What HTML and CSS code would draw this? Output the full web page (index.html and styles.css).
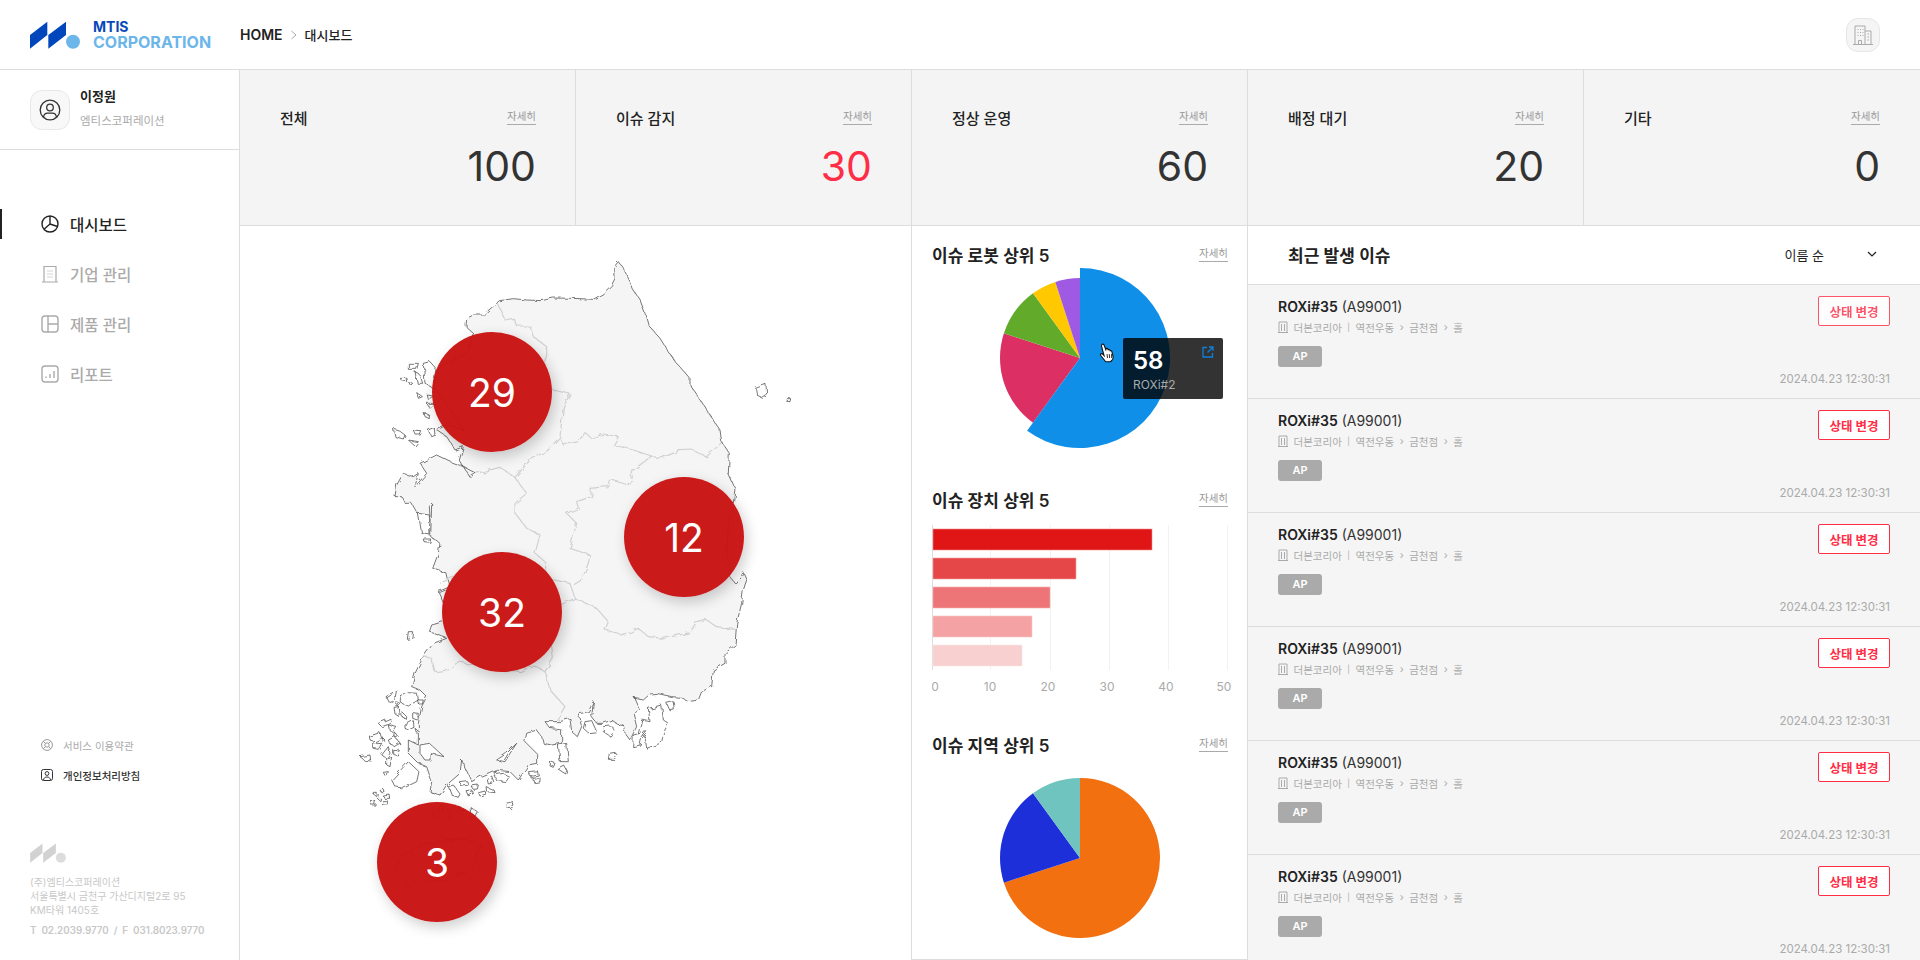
FILE: index.html
```html
<!DOCTYPE html>
<html lang="ko">
  <head>
    <meta charset="utf-8">
    <title>MTIS 대시보드</title>
    <link rel="stylesheet" href="styles.css">
  </head>
  <body>
    <header class="topbar">
      <div class="logo">
        <svg class="logo-mark" width="50" height="28" viewBox="30 21 50 28">
          <polygon points="30,35 47.3,21.7 47.3,35 30,48.7" fill="#0047bb"/>
          <polygon points="48.3,35 66,21.7 66,35 48.3,48.7" fill="#0047bb"/>
          <circle cx="73" cy="41.7" r="7" fill="#6cb6ea"/>
        </svg>
        <div class="logo-text">
          <span class="logo-top">MTIS</span>
          <span class="logo-bottom">CORPORATION</span>
        </div>
      </div>
      <nav class="crumb">
        <span class="crumb-home">HOME</span>
        <svg width="8" height="10" viewBox="0 0 8 10" fill="none" stroke="#aaa" stroke-width="1"><path d="M1.5 1l4.5 4-4.5 4"/></svg>
        <span class="crumb-page">대시보드</span>
      </nav>
      <div class="company-btn">
        <svg width="22" height="22" viewBox="0 0 22 22" fill="none" stroke="#aaa" stroke-width="1">
          <path d="M1 20.5h20M3 20.5V2h10v18.5M13 7h6v13.5M6.500 20.500v-4h3v4"/>
          <path d="M5.500 5.500h1M8 5.500h1M10.500 5.500h1M5.500 8.500h1M8 8.500h1M10.500 8.500h1M5.500 11.500h1M8 11.500h1M10.500 11.500h1M15.500 10h1.500M15.500 13h1.500M15.500 16h1.500"/>
        </svg>
      </div>
    </header>

    <div class="layout">
      <aside class="sidebar">
        <div class="profile">
          <div class="avatar">
            <svg width="22" height="22" viewBox="0 0 22 22" fill="none" stroke="#333" stroke-width="1.300">
              <circle cx="11" cy="11" r="9.800"/>
              <circle cx="11" cy="8.500" r="3.300"/>
              <path d="M4.500 18c.6-2.800 2.300-3.800 4-3.800h5c1.700 0 3.400 1 4 3.800"/>
            </svg>
          </div>
          <div class="profile-text">
            <div class="profile-name">이정원</div>
            <div class="profile-org">엠티스코퍼레이션</div>
          </div>
        </div>

        <ul class="menu">
          <li class="menu-item active">
            <svg width="18" height="18" viewBox="0 0 18 18" fill="none" stroke="currentColor" stroke-width="1.400">
              <circle cx="9" cy="9" r="8"/><path d="M9 1v8L3 14.200M9 9l7.500 2.500"/>
            </svg>
            대시보드
          </li>
          <li class="menu-item">
            <svg width="18" height="18" viewBox="0 0 18 18" fill="none" stroke="currentColor" stroke-width="1.200">
              <path d="M1 17h16M3 17V1.500h12V17"/>
              <path d="M6.500 6h1M10.500 6h1M6.500 9h1M10.500 9h1M6.500 12h1M10.500 12h1M8.500 6h1M8.500 9h1M8.500 12h1"/>
            </svg>
            기업 관리
          </li>
          <li class="menu-item">
            <svg width="18" height="18" viewBox="0 0 18 18" fill="none" stroke="currentColor" stroke-width="1.400">
              <rect x="1" y="1" width="16" height="16" rx="3"/><path d="M7 1v16M7 9h10"/>
            </svg>
            제품 관리
          </li>
          <li class="menu-item">
            <svg width="18" height="18" viewBox="0 0 18 18" fill="none" stroke="currentColor" stroke-width="1.400">
              <rect x="1" y="1" width="16" height="16" rx="3"/><path d="M5 13v-1.500M9 13V9M13 13V6"/>
            </svg>
            리포트
          </li>
        </ul>

        <div class="side-bottom">
          <a class="side-link">
            <svg width="12" height="12" viewBox="0 0 12 12" fill="none" stroke="#999" stroke-width="1">
              <circle cx="6" cy="6" r="5.400"/><circle cx="6" cy="6" r="2.200"/><path d="M2.200 2.200l2.200 2.200M9.800 2.200L7.600 4.400M2.200 9.800l2.200-2.200M9.800 9.800L7.600 7.600"/>
            </svg>
            서비스 이용약관
          </a>
          <a class="side-link strong">
            <svg width="12" height="12" viewBox="0 0 12 12" fill="none" stroke="#333" stroke-width="1">
              <rect x=".5" y=".5" width="11" height="11" rx="2"/><circle cx="6" cy="4.500" r="1.900"/><path d="M2.500 11c.3-2 1.500-3 3.500-3s3.200 1 3.500 3"/>
            </svg>
            개인정보처리방침
          </a>
          <svg class="side-logo" width="36" height="20" viewBox="30 21 50 28">
            <polygon points="30,35 47.3,21.7 47.3,35 30,48.7" fill="#d2d2d2"/>
            <polygon points="48.3,35 66,21.7 66,35 48.3,48.7" fill="#d2d2d2"/>
            <circle cx="73" cy="41.700" r="7" fill="#dcdcdc"/>
          </svg>
          <address class="side-addr">(주)엠티스코퍼레이션<br>서울특별시 금천구 가산디지털2로 95<br>KM타워 1405호</address>
          <div class="side-tel">T&nbsp; 02.2039.9770&nbsp; /&nbsp; F&nbsp; 031.8023.9770</div>
        </div>
      </aside>

      <main class="board">
        <section class="stat"><div class="stat-head"><span class="stat-title">전체</span><a class="more">자세히</a></div><div class="stat-num">100</div></section>
        <section class="stat"><div class="stat-head"><span class="stat-title">이슈 감지</span><a class="more">자세히</a></div><div class="stat-num red">30</div></section>
        <section class="stat"><div class="stat-head"><span class="stat-title">정상 운영</span><a class="more">자세히</a></div><div class="stat-num">60</div></section>
        <section class="stat"><div class="stat-head"><span class="stat-title">배정 대기</span><a class="more">자세히</a></div><div class="stat-num">20</div></section>
        <section class="stat"><div class="stat-head"><span class="stat-title">기타</span><a class="more">자세히</a></div><div class="stat-num">0</div></section>

        <section class="map-panel">
          <svg class="korea" width="500" height="720" viewBox="0 0 1500 2160">
            <defs>
              <filter id="coast" x="-5%" y="-5%" width="110%" height="110%">
                <feTurbulence type="fractalNoise" baseFrequency="0.045" numOctaves="2" seed="4"/>
                <feDisplacementMap in="SourceGraphic" scale="16"/>
              </filter>
            </defs>
            <g filter="url(#coast)">
            <polygon class="land" points="478,182 520,176 560,180 605,182 640,174 700,175 760,178 790,160 815,135 825,115 824,85 838,68 850,85 870,125 880,150 900,180 915,220 925,255 960,295 985,335 1010,370 1050,415 1050,435 1072,465 1100,510 1140,570 1145,605 1168,640 1165,700 1185,745 1180,790 1165,850 1158,920 1170,1010 1185,1030 1210,998 1220,1020 1210,1050 1205,1090 1190,1150 1185,1215 1155,1240 1155,1270 1120,1290 1115,1340 1085,1355 1075,1380 1045,1385 1020,1372 995,1370 950,1360 930,1362 910,1380 885,1375 900,1410 880,1420 890,1460 870,1500 855,1480 850,1455 830,1450 815,1440 790,1450 770,1450 755,1430 760,1385 745,1415 715,1422 725,1460 712,1490 695,1475 690,1435 660,1445 615,1445 630,1465 665,1470 665,1510 635,1515 610,1510 605,1490 590,1470 560,1480 555,1505 590,1540 590,1570 565,1575 535,1620 510,1595 465,1590 420,1610 395,1625 365,1560 360,1600 320,1635 300,1665 270,1655 275,1625 260,1580 235,1570 205,1540 205,1500 235,1515 235,1450 245,1400 260,1370 240,1350 215,1340 225,1300 250,1250 280,1210 320,1195 268,1175 275,1155 310,1145 315,1100 295,1055 330,1040 320,1000 278,985 295,940 300,910 272,890 275,790 268,800 270,830 235,825 215,790 195,790 185,770 165,770 170,735 190,700 220,710 235,700 225,740 260,700 240,670 290,645 330,665 370,680 408,700 390,712 358,660 370,620 345,630 320,590 290,570 320,555 370,570 310,480 280,440 300,380 380,340 400,280 378,260 380,235 400,225 430,225"/>
            <g class="borders">
              <polyline points="472,190 495,240 520,235 530,258 570,258 580,290 620,320 620,345 600,410 620,445 690,462 670,500 660,590 625,630 570,660 525,712"/>
              <polyline points="660,595 670,615 715,605 735,578 755,595 790,582 835,590 820,615 880,630 935,648 960,655 1020,632 1060,630 1100,650 1145,608"/>
              <polyline points="408,700 480,682 525,712 560,760 525,790 525,820 560,865 600,885 585,940 615,965 620,1015 690,1030 705,1075 770,1105 805,1145 795,1170 855,1185 895,1165 925,1190 970,1195 1050,1178 1070,1145 1095,1138 1130,1160 1185,1165"/>
              <polyline points="935,648 880,690 865,735 815,720 800,740 750,745 755,770 710,785 715,805 680,820 710,850 690,925 750,945 745,970 725,1020 700,1035"/>
              <polyline points="705,1075 660,1095 620,1190 635,1220 640,1255 615,1295 630,1350 675,1400 650,1440"/>
              <polyline points="250,1250 275,1255 285,1295 325,1290 355,1265 420,1280 540,1295 580,1275 615,1295"/>
              <polyline points="300,1030 400,985 520,995 600,1010"/>
            </g>
            <g class="isles">
              <polygon points="205,370 235,370 230,388 205,388"/>
              <polygon points="250,370 270,365 288,385 280,445 255,430"/>
              <polygon points="225,395 240,405 248,430 232,430"/>
              <polygon points="178,412 198,412 200,425 185,422"/>
              <polygon points="205,425 218,430 212,436"/>
              <polygon points="230,458 248,470 235,475"/>
              <polygon points="262,465 280,468 265,478"/>
              <polygon points="260,490 285,490 270,505"/>
              <polygon points="252,518 268,525 268,536 255,530"/>
              <polygon points="160,565 175,570 195,585 190,597 165,590"/>
              <polygon points="220,570 242,572 238,582 225,582"/>
              <polygon points="265,570 282,562 285,582 272,587"/>
              <polygon points="205,600 235,605 225,618"/>
              <polygon points="1247,445 1278,433 1280,462 1265,472 1250,465"/>
              <polygon points="1338,476 1352,476 1350,485 1340,484"/>
              <polygon points="250,897 272,897 270,907 252,905"/>
              <polygon points="235,820 268,825 270,885 245,880"/>
            </g>
            <g class="isles" transform="translate(0,1050)">
              <polygon points="205,125 218,125 215,145 202,148"/>
              <polygon points="138,320 170,300 162,340 145,335"/>
              <polygon points="180,322 205,308 232,310 235,330 205,348 185,340"/>
              <polygon points="232,330 250,330 247,342 236,342"/>
              <polygon points="170,338 182,342 175,350"/>
              <polygon points="162,352 175,350 178,380 165,372"/>
              <polygon points="185,365 200,380 200,388 186,380"/>
              <polygon points="218,368 235,370 232,390 218,385"/>
              <polygon points="195,405 220,392 222,412 205,420 195,415"/>
              <polygon points="115,400 150,385 155,400 125,410"/>
              <polygon points="145,405 170,412 160,428 148,420"/>
              <polygon points="225,415 238,425 230,430"/>
              <polygon points="88,438 120,428 125,445 105,455 90,450"/>
              <polygon points="100,462 125,460 115,478 100,475"/>
              <polygon points="127,442 135,450 130,458"/>
              <polygon points="165,428 175,440 165,445"/>
              <polygon points="145,450 165,440 180,460 165,468 150,462"/>
              <polygon points="125,495 145,470 150,490 140,505"/>
              <polygon points="158,478 178,480 172,495 158,490"/>
              <polygon points="140,505 155,500 150,530 140,525"/>
              <polygon points="60,500 90,495 92,510 70,508"/>
              <polygon points="240,465 268,460 312,500 270,490 270,510 255,510 240,490"/>
              <polygon points="155,570 205,515 237,545 230,575 190,595 165,590"/>
              <polygon points="130,547 145,545 142,557 135,557"/>
              <polygon points="98,610 112,610 110,620"/>
              <polygon points="122,600 132,598 135,608 125,608"/>
              <polygon points="130,618 150,615 152,628 135,628"/>
              <polygon points="112,625 122,625 120,632"/>
              <polygon points="90,632 105,632 105,645 93,645"/>
              <polygon points="128,635 145,635 145,645 128,645"/>
              <polygon points="170,825 195,790 240,770 300,755 370,745 405,760 418,775 405,815 380,845 310,870 265,875 235,870 208,888 175,850"/>
              <circle cx="423" cy="768" r="5"/>
              <polygon points="283,668 295,665 298,680 285,682"/>
              <polygon points="298,650 310,650 312,660 300,662"/>
              <polygon points="322,655 332,658 330,665 322,663"/>
              <polygon points="320,675 332,675 330,684 322,684"/>
              <polygon points="355,648 375,660 358,665"/>
              <polygon points="390,650 412,665 405,678 392,670"/>
              <polygon points="392,680 408,680 395,690"/>
              <polygon points="498,640 518,635 522,648 510,656 500,652"/>
              <polygon points="325,590 340,585 360,612 355,622 335,615"/>
              <polygon points="358,575 380,572 385,585 362,590"/>
              <polygon points="378,602 395,600 398,612 385,618"/>
              <polygon points="393,588 415,585 412,597 400,598"/>
              <polygon points="416,608 435,603 438,612 420,618"/>
              <polygon points="438,590 462,600 465,608 440,605"/>
              <polygon points="442,570 455,558 462,578 445,582"/>
              <polygon points="462,555 490,550 508,560 498,575 470,572"/>
              <polygon points="462,540 470,545 462,550"/>
              <polygon points="565,545 592,542 595,555 572,560"/>
              <polygon points="578,565 600,562 600,575 582,578"/>
              <polygon points="632,515 645,520 640,532 630,528"/>
              <polygon points="652,535 672,525 683,545 680,555"/>
              <polygon points="808,490 825,487 833,497 822,508 805,508"/>
              <polygon points="655,465 680,460 685,515 660,515"/>
              <polygon points="470,510 500,490 530,460 510,490 495,515"/>
              <polygon points="790,410 815,408 825,425 810,438 790,425"/>
              <polygon points="735,395 755,392 770,425 745,428 730,415"/>
              <polygon points="925,355 965,345 970,390 985,400 965,440 960,460 920,475 915,440 895,430 905,390 930,395"/>
              <polygon points="980,340 1000,335 1003,360 990,362"/>
              <polygon points="880,435 900,430 920,425 905,445 900,465 878,470"/>
            </g>
            </g>
          </svg>
          <div class="pin pin-a">29</div>
          <div class="pin pin-b">12</div>
          <div class="pin pin-c">32</div>
          <div class="pin pin-d">3</div>
        </section>

        <section class="charts">
          <div class="chart">
            <div class="chart-head"><h3>이슈 로봇 상위 5</h3><a class="more">자세히</a></div>
            <svg class="pie pie-robot" width="180" height="180" viewBox="-90 -90 180 180">
              <path d="M0 0L-47 64.700A80 80 0 0 1-76.100-24.700Z" fill="#dc3065"/>
              <path d="M0 0L-76.100-24.700A80 80 0 0 1-47-64.700Z" fill="#62aa2a"/>
              <path d="M0 0L-47-64.700A80 80 0 0 1-24.700-76.100Z" fill="#ffc800"/>
              <path d="M0 0L-24.700-76.100A80 80 0 0 1 0-80Z" fill="#9f5ae3"/>
              <path d="M0 0V-90A90 90 0 1 1-52.900 72.800Z" fill="#0f8fe8"/>
            </svg>
            <div class="tip">
              <svg class="tip-link" width="12" height="12" viewBox="0 0 12 12" fill="none" stroke="#0f7fd8" stroke-width="1.300">
                <path d="M5 1.500H1v9.500h9.500V7M7 1h4v4M11 1L5.500 6.500"/>
              </svg>
              <div class="tip-num">58</div>
              <div class="tip-name">ROXi#2</div>
            </div>
            <svg class="hand" width="17" height="20" viewBox="0 0 15 18">
              <path d="M3.500 1.200c.8-.5 1.600 0 1.900.8l1.500 4 .2-.8c.5-.6 1.300-.4 1.600.2l.3.7c.5-.5 1.300-.3 1.600.3l.2.6c.6-.3 1.300 0 1.500.6l1.100 4.400c.3 1.500-.2 3-1.400 4l-1 .9H6.800L2.500 11.500c-.6-.8-.6-1.500-.1-1.800.6-.4 1.300 0 1.900.6l1 1L3 2.800c-.1-.6 0-1.200.5-1.600z" fill="#fff" stroke="#111" stroke-width="1"/>
              <path d="M8 10l.4 3.500M10 10l.3 3.500M12 10l.2 3.500" stroke="#111" stroke-width=".8"/>
            </svg>
          </div>
          <div class="chart">
            <div class="chart-head"><h3>이슈 장치 상위 5</h3><a class="more">자세히</a></div>
            <svg class="bars" width="316" height="178" viewBox="932 520 316 178">
              <g stroke="#f2f2f2" stroke-width="1">
                <path d="M990.500 525v145M1050.500 525v145M1109.500 525v145M1168.500 525v145M1227.500 525v145"/>
              </g>
              <path d="M932.500 525v145" stroke="#ddd"/>
              <rect x="933" y="529" width="219" height="21" fill="#e01515" stroke="#f09090" stroke-width=".6"/>
              <rect x="933" y="558" width="143" height="21" fill="#e54648" stroke="#f4a0a0" stroke-width=".6"/>
              <rect x="933" y="587" width="117" height="21" fill="#ee7577" stroke="#f6b0b0" stroke-width=".6"/>
              <rect x="933" y="616" width="99" height="21" fill="#f4a2a3" stroke="#f9c8c8" stroke-width=".6"/>
              <rect x="933" y="645" width="89" height="21" fill="#f8d0d0" stroke="#fbe4e4" stroke-width=".6"/>
              <g class="bar-labels" text-anchor="middle">
                <text x="935" y="691">0</text>
                <text x="990" y="691">10</text>
                <text x="1048" y="691">20</text>
                <text x="1107" y="691">30</text>
                <text x="1166" y="691">40</text>
                <text x="1224" y="691">50</text>
              </g>
            </svg>
          </div>
          <div class="chart">
            <div class="chart-head"><h3>이슈 지역 상위 5</h3><a class="more">자세히</a></div>
            <svg class="pie pie-area" width="160" height="160" viewBox="-80 -80 160 160">
              <path d="M0 0V-80A80 80 0 1 1-76.100 24.700Z" fill="#f27010"/>
              <path d="M0 0L-76.100 24.700A80 80 0 0 1-47-64.700Z" fill="#1d2fd8"/>
              <path d="M0 0L-47-64.700A80 80 0 0 1 0-80Z" fill="#6fc4bf"/>
            </svg>
          </div>
        </section>

        <section class="issues">
          <div class="issues-head">
            <h2>최근 발생 이슈</h2>
            <div class="sort">
              <span>이름 순</span>
              <svg width="10" height="6" viewBox="0 0 10 6" fill="none" stroke="#222" stroke-width="1.200"><path d="M1 1l4 4 4-4"/></svg>
            </div>
          </div>
          <ul class="issue-list">
            <li class="issue">
              <div class="issue-main">
                <div class="issue-name"><b>ROXi#35</b> (A99001)</div>
                <div class="issue-path">
                  <svg width="10" height="12" viewBox="0 0 10 12" fill="none" stroke="#aaa"><path d="M0 11.500h10M1 11.500V1h8v10.500M3.500 3v7M6.500 3v7"/></svg>
                  <span>더본코리아</span><i class="sep">|</i><span>역전우동</span><i>›</i><span>금천점</span><i>›</i><span>홀</span>
                </div>
                <span class="chip">AP</span>
              </div>
              <div class="issue-side"><button class="change first">상태 변경</button><time>2024.04.23 12:30:31</time></div>
            </li>
            <li class="issue">
              <div class="issue-main">
                <div class="issue-name"><b>ROXi#35</b> (A99001)</div>
                <div class="issue-path">
                  <svg width="10" height="12" viewBox="0 0 10 12" fill="none" stroke="#aaa"><path d="M0 11.500h10M1 11.500V1h8v10.500M3.500 3v7M6.500 3v7"/></svg>
                  <span>더본코리아</span><i class="sep">|</i><span>역전우동</span><i>›</i><span>금천점</span><i>›</i><span>홀</span>
                </div>
                <span class="chip">AP</span>
              </div>
              <div class="issue-side"><button class="change">상태 변경</button><time>2024.04.23 12:30:31</time></div>
            </li>
            <li class="issue">
              <div class="issue-main">
                <div class="issue-name"><b>ROXi#35</b> (A99001)</div>
                <div class="issue-path">
                  <svg width="10" height="12" viewBox="0 0 10 12" fill="none" stroke="#aaa"><path d="M0 11.500h10M1 11.500V1h8v10.500M3.500 3v7M6.500 3v7"/></svg>
                  <span>더본코리아</span><i class="sep">|</i><span>역전우동</span><i>›</i><span>금천점</span><i>›</i><span>홀</span>
                </div>
                <span class="chip">AP</span>
              </div>
              <div class="issue-side"><button class="change">상태 변경</button><time>2024.04.23 12:30:31</time></div>
            </li>
            <li class="issue">
              <div class="issue-main">
                <div class="issue-name"><b>ROXi#35</b> (A99001)</div>
                <div class="issue-path">
                  <svg width="10" height="12" viewBox="0 0 10 12" fill="none" stroke="#aaa"><path d="M0 11.500h10M1 11.500V1h8v10.500M3.500 3v7M6.500 3v7"/></svg>
                  <span>더본코리아</span><i class="sep">|</i><span>역전우동</span><i>›</i><span>금천점</span><i>›</i><span>홀</span>
                </div>
                <span class="chip">AP</span>
              </div>
              <div class="issue-side"><button class="change">상태 변경</button><time>2024.04.23 12:30:31</time></div>
            </li>
            <li class="issue">
              <div class="issue-main">
                <div class="issue-name"><b>ROXi#35</b> (A99001)</div>
                <div class="issue-path">
                  <svg width="10" height="12" viewBox="0 0 10 12" fill="none" stroke="#aaa"><path d="M0 11.500h10M1 11.500V1h8v10.500M3.500 3v7M6.500 3v7"/></svg>
                  <span>더본코리아</span><i class="sep">|</i><span>역전우동</span><i>›</i><span>금천점</span><i>›</i><span>홀</span>
                </div>
                <span class="chip">AP</span>
              </div>
              <div class="issue-side"><button class="change">상태 변경</button><time>2024.04.23 12:30:31</time></div>
            </li>
            <li class="issue">
              <div class="issue-main">
                <div class="issue-name"><b>ROXi#35</b> (A99001)</div>
                <div class="issue-path">
                  <svg width="10" height="12" viewBox="0 0 10 12" fill="none" stroke="#aaa"><path d="M0 11.500h10M1 11.500V1h8v10.500M3.500 3v7M6.500 3v7"/></svg>
                  <span>더본코리아</span><i class="sep">|</i><span>역전우동</span><i>›</i><span>금천점</span><i>›</i><span>홀</span>
                </div>
                <span class="chip">AP</span>
              </div>
              <div class="issue-side"><button class="change">상태 변경</button><time>2024.04.23 12:30:31</time></div>
            </li>
          </ul>
        </section>
      </main>
    </div>
  </body>
</html>
```

FILE: styles.css
```css
* {
  box-sizing: border-box;
}

html,
body {
  margin: 0;
  height: 960px;
  overflow: hidden;
}

body {
  font-family: Inter, "Noto Sans CJK KR", sans-serif;
  color: #222;
  background: #fff;
}

h2,
h3,
ul {
  margin: 0;
  padding: 0;
  list-style: none;
}

/* top bar */
.topbar {
  display: flex;
  align-items: center;
  height: 70px;
  padding: 0 40px 0 30px;
  border-bottom: 1px solid #ddd;
}

.logo {
  display: flex;
  width: 210px;
  align-items: center;
}

.logo-mark {
  display: block;
  margin: 1px 13px 0 0;
}

.logo-text {
  display: flex;
  flex-direction: column;
  font-weight: 700;
  line-height: 15.500px;
}

.logo-top {
  font-size: 14px;
  color: #0a48b8;
}

.logo-bottom {
  font-size: 16px;
  color: #6cb6ea;
}

.crumb {
  display: flex;
  align-items: center;
  gap: 7px;
  font-size: 13px;
  font-weight: 500;
}

.crumb-home {
  font-size: 14px;
  font-weight: 600;
}

.company-btn {
  display: flex;
  align-items: center;
  justify-content: center;
  width: 34px;
  height: 34px;
  margin-left: auto;
  border: 1px solid #e6e6e6;
  border-radius: 12px;
  background: #f5f5f5;
}

/* sidebar */
.layout {
  display: flex;
  height: 890px;
}

.sidebar {
  display: flex;
  flex-direction: column;
  flex: 0 0 240px;
  min-width: 0;
  border-right: 1px solid #ddd;
}

.profile {
  display: flex;
  align-items: center;
  gap: 10px;
  height: 80px;
  padding: 0 30px;
  border-bottom: 1px solid #ddd;
}

.avatar {
  display: flex;
  align-items: center;
  justify-content: center;
  width: 40px;
  height: 40px;
  border: 1px solid #e8e8e8;
  border-radius: 12px;
  background: #f8f8f8;
}

.profile-name {
  font-size: 13px;
  font-weight: 700;
  line-height: 18px;
}

.profile-org {
  margin-top: 7px;
  font-size: 11.500px;
  line-height: 18px;
  color: #aaa;
}

.profile-text {
  margin-top: -2px;
}

.menu {
  margin-top: 49px;
}

.menu-item {
  display: flex;
  align-items: center;
  gap: 11px;
  height: 50px;
  padding-left: 41px;
  font-size: 15.500px;
  font-weight: 500;
  color: #aaa;
  position: relative;
}

.menu-item.active {
  color: #222;
}

.menu-item.active::before {
  content: "";
  position: absolute;
  left: 0;
  top: 10px;
  width: 2px;
  height: 30px;
  background: #222;
}

.side-bottom {
  margin-top: auto;
  padding: 0 30px 22px;
}

.side-link {
  display: flex;
  align-items: center;
  gap: 10px;
  height: 30px;
  padding-left: 11px;
  font-size: 10.500px;
  color: #aaa;
}

.side-link.strong {
  color: #333;
  font-weight: 500;
}

.side-logo {
  display: block;
  margin: 53px 0 12px;
}

.side-addr {
  font-size: 10px;
  font-style: normal;
  line-height: 14px;
  color: #c8c8c8;
}

.side-tel {
  margin-top: 7px;
  font-size: 9.800px;
  font-weight: 600;
  line-height: 14px;
  color: #c8c8c8;
  white-space: nowrap;
}

/* dashboard grid */
.board {
  flex: 1;
  display: grid;
  grid-template-columns: repeat(5, 336px);
  grid-template-rows: 156px 734px;
}

.stat {
  padding: 37px 39px 0 40px;
  border-right: 1px solid #ddd;
  border-bottom: 1px solid #ddd;
  background: #f4f4f4;
}

.stat:nth-child(5) {
  border-right: 0;
  padding-right: 40px;
}

.stat-head {
  display: flex;
  align-items: center;
  justify-content: space-between;
  height: 20px;
}

.stat-title {
  font-size: 15px;
  font-weight: 500;
  color: #222;
}

.more {
  font-size: 10.500px;
  line-height: 14px;
  color: #999;
  border-bottom: 1px solid #aaa;
}

.stat-num {
  margin-top: 15px;
  font-size: 41px;
  line-height: 48px;
  text-align: right;
  color: #333;
}

.stat-num.red {
  color: #ff2d46;
}

/* map */
.map-panel {
  grid-column: span 2;
  position: relative;
  padding: 14px 0 0 100px;
  border-right: 1px solid #ddd;
}

.korea {
  display: block;
}

.land {
  fill: #f5f5f5;
  stroke: #444;
  stroke-width: 2.200;
  stroke-linejoin: round;
}

.borders polyline {
  fill: none;
  stroke: #d0d0d0;
  stroke-width: 3.500;
  stroke-linejoin: round;
}

.isles polygon,
.isles circle {
  fill: #fff;
  stroke: #444;
  stroke-width: 2.200;
  stroke-linejoin: round;
}

.pin {
  position: absolute;
  display: flex;
  align-items: center;
  justify-content: center;
  width: 120px;
  height: 120px;
  border-radius: 50%;
  background: rgba(201, 19, 19, 0.97);
  box-shadow: 3px 5px 14px rgba(0, 0, 0, 0.2);
  font-size: 39px;
  color: #fff;
}

.pin-a {
  left: 192px;
  top: 106px;
}

.pin-b {
  left: 384px;
  top: 251px;
}

.pin-c {
  left: 202px;
  top: 326px;
}

.pin-d {
  left: 137px;
  top: 576px;
}

/* charts */
.charts {
  display: grid;
  grid-template-columns: 100%;
  grid-template-rows: 245px 245px 244px;
  border-right: 1px solid #ddd;
  border-bottom: 1px solid #ddd;
}

.chart {
  position: relative;
  min-width: 0;
  padding: 18px 19px 0 20px;
}

.chart-head {
  display: flex;
  align-items: center;
  justify-content: space-between;
  height: 20px;
}

.chart-head h3 {
  font-size: 17px;
  font-weight: 600;
}

.pie {
  display: block;
  margin-left: 58px;
}

.pie-robot {
  margin-top: 4px;
}

.pie-area {
  margin: 24px 0 0 68px;
}

.bars {
  display: block;
  margin-top: 11px;
}

.bar-labels {
  font-size: 12px;
  fill: #aaa;
}

.tip {
  position: absolute;
  left: 211px;
  top: 112px;
  width: 100px;
  height: 61px;
  padding: 10px 10px 0;
  border-radius: 2px;
  background: rgba(0, 0, 0, 0.8);
}

.tip-link {
  position: absolute;
  right: 9px;
  top: 8px;
}

.tip-num {
  font-size: 24px;
  font-weight: 600;
  line-height: 26px;
  color: #fff;
}

.tip-name {
  margin-top: 3px;
  font-size: 12px;
  line-height: 16px;
  color: #aaa;
}

.hand {
  position: absolute;
  left: 186px;
  top: 117px;
}

/* issue list */
.issues {
  grid-column: span 2;
  overflow: hidden;
}

.issues-head {
  display: flex;
  align-items: center;
  justify-content: space-between;
  height: 59px;
  padding: 0 43px 2px 40px;
  border-bottom: 1px solid #ddd;
}

.issues-head h2 {
  font-size: 17px;
  font-weight: 600;
}

.sort {
  display: flex;
  align-items: center;
  gap: 43px;
  font-size: 13px;
}

.issue {
  display: flex;
  justify-content: space-between;
  height: 114px;
  padding: 11px 30px 0;
  border-bottom: 1px solid #ddd;
  background: #f5f5f5;
}

.issue-main {
  padding-top: 1px;
}

.issue-name {
  font-size: 14px;
  line-height: 20px;
  color: #333;
}

.issue-name b {
  font-weight: 600;
  color: #222;
}

.issue-path {
  display: flex;
  align-items: center;
  gap: 4.500px;
  height: 16px;
  margin-top: 2px;
  font-size: 10.500px;
  color: #aaa;
}

.issue-path svg {
  margin-right: 1px;
}

.issue-path i {
  font-style: normal;
  margin: 0 1px;
}

.issue-path .sep {
  font-size: 8px;
}

.chip {
  display: block;
  width: 44px;
  height: 21px;
  margin-top: 11px;
  border-radius: 3px;
  background: #aaa;
  font-size: 11px;
  font-weight: 600;
  line-height: 21px;
  text-align: center;
  color: #fff;
}

.issue-side {
  display: flex;
  flex-direction: column;
  align-items: flex-end;
}

.change {
  width: 72px;
  height: 30px;
  padding: 0;
  border: 1px solid #ff2d46;
  border-radius: 2px;
  background: #fff;
  font: 600 12.500px Inter, "Noto Sans CJK KR", sans-serif;
  color: #ff2d46;
}

.change.first {
  opacity: 0.8;
}

time {
  margin-top: 44px;
  font-size: 11.500px;
  line-height: 18px;
  color: #aaa;
}
```
